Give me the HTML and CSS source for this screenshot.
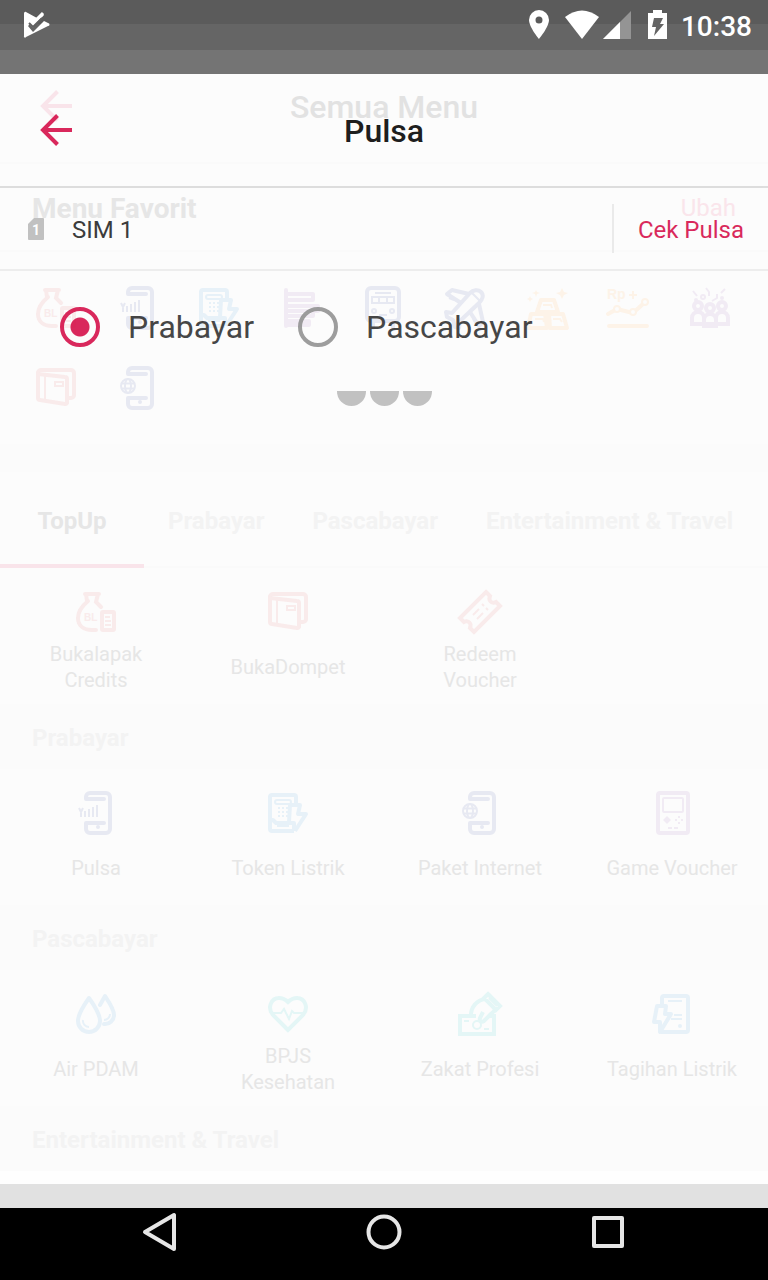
FILE: index.html
```html
<!DOCTYPE html>
<html lang="id">
<head>
<meta charset="utf-8">
<meta name="viewport" content="width=device-width, initial-scale=1">
<title>Pulsa</title>
<link rel="stylesheet" href="styles.css">
</head>
<body>
<svg class="sprite" aria-hidden="true">
  <symbol id="arrow" viewBox="0 0 32 32"><path d="M32 16H3M17.500 1.500 3 16l14.500 14.500" stroke-width="4"/></symbol>
  <symbol id="bag" viewBox="0 0 48 48">
    <path d="M13 6h14M14 6l1 7h1M26 6l-2 8 5 5M16 13C10 18 6 23 6 30c0 8 6 12 14 12h4" stroke-linecap="round"/>
    <rect x="30" y="24" width="12" height="18" rx="1"/><path d="M33 29h5M33 33h6M33 37h6" stroke-width="2"/>
    <text x="12" y="33" class="glyph-small">BL</text>
  </symbol>
  <symbol id="wallet" viewBox="0 0 48 48">
    <path d="M6 34V9a3 3 0 0 1 3-3h30a3 3 0 0 1 3 3v22a3 3 0 0 1-3 3h-2"/><path d="M6 10l27 3a2 2 0 0 1 2 2v24a2 2 0 0 1-2 1L8 36a2 2 0 0 1-2-2z"/>
    <path d="M13 12v23M23 18h8v4h-8z" stroke-width="2"/>
  </symbol>
  <symbol id="phone" viewBox="0 0 48 48">
    <path d="M32 10H14V8a4 4 0 0 1 4-4h16a4 4 0 0 1 4 4v32a4 4 0 0 1-4 4H18a4 4 0 0 1-4-4v-6h18" stroke-linejoin="round" stroke-linecap="round"/>
    <circle class="solid" cx="26" cy="38" r="2"/>
  </symbol>
  <symbol id="pulsa" viewBox="0 0 48 48"><use href="#phone"/><path d="M7 19l2 4 2-4M9 22v6M13 22v6M17 20v8M21 18v10M25 16v12" stroke-width="2"/></symbol>
  <symbol id="internet" viewBox="0 0 48 48"><use href="#phone"/><g stroke-width="2"><circle cx="14" cy="22" r="7"/><path d="M7 19.500h14M7 24.500h14"/><ellipse cx="14" cy="22" rx="3" ry="7"/></g></symbol>
  <symbol id="token" viewBox="0 0 48 48">
    <path d="M32 16V8a2 2 0 0 0-2-2H8a2 2 0 0 0-2 2v32a2 2 0 0 0 2 2h22M7 31h2l3 3h18v8M25 33l1-17h10l-2 9h8L31 42" stroke-linejoin="round"/>
    <rect x="11" y="11" width="16" height="4" rx="2" stroke-width="2"/><path d="M14 19h2m2 0h2m2 0h2M14 23h2m2 0h2m2 0h2M14 27h2m2 0h2m2 0h2M13 37h12" stroke-width="2"/>
  </symbol>
</svg>

<header class="status">
  <svg width="28" height="28" viewBox="0 0 28 28" role="img" aria-label="Notifikasi"><path d="M2 3v22a1 1 0 0 0 2 1l22-11a1.500 1.500 0 0 0 0-3l-4-2L11 21l-5-6 2-2 3 3 9-12-1-1-4 4L4 1C3 .5 2 1 2 3z" fill="#fff"/><path d="M14 8l6-6 2 2-8 9-3 4-5-5 2-2 3 3z" fill="#fff"/><path d="M7 12l4 4 9-9" fill="none" stroke="#606060" stroke-width="2"/><path d="M14 9l7-7" stroke="#fff" stroke-width="3"/></svg>
  <div class="status-right">
    <svg width="20" height="30" viewBox="0 0 20 30" role="img" aria-label="Lokasi"><path d="M10 0a10 10 0 0 0-10 10c0 7 10 19 10 19s10-12 10-19A10 10 0 0 0 10 0zm0 13.500a3.500 3.500 0 1 1 0-7 3.500 3.500 0 0 1 0 7z" fill="#fff"/></svg>
    <svg class="wifi" width="34" height="30" viewBox="0 0 34 30" role="img" aria-label="Wi-Fi"><path d="M0 7Q17-6 34 7L17 29z" fill="#fff"/></svg>
    <svg width="28" height="30" viewBox="0 0 28 30" role="img" aria-label="Sinyal"><path d="M28 1v28H0z" fill="#949494"/><path d="M17 12v17H0z" fill="#fff"/></svg>
    <svg class="battery" width="19" height="30" viewBox="0 0 19 30" role="img" aria-label="Baterai"><path d="M5 0h9v3h5v26H0V3h5z" fill="#fff"/><path d="M6 8h9l-3 6h4L6 26l2-9H4z" fill="#646464"/></svg>
    <time>10:38</time>
  </div>
</header>

<div class="stage">
  <section class="under" aria-label="Semua Menu">
    <div class="bar"><button class="back faint-pink" aria-label="Kembali"><svg class="line" width="32" height="32"><use href="#arrow"/></svg></button><h2 class="title">Semua Menu</h2></div>
    <div class="fav-head"><h3>Menu Favorit</h3><a href="#">Ubah</a></div>
    <div class="fav-grid">
      <svg class="icon red"><use href="#bag"/></svg>
      <svg class="icon navy"><use href="#pulsa"/></svg>
      <svg class="icon blue"><use href="#token"/></svg>
      <svg class="icon purple" viewBox="0 0 48 48"><path d="M9 6v36" stroke-linecap="round"/><path d="M10 10h26v6H10M10 22h31v5H10M10 32h26v-5M10 37h22v4H10" stroke-linejoin="round"/></svg>
      <svg class="icon navy" viewBox="0 0 48 48"><rect x="8" y="4" width="32" height="33" rx="4"/><path d="M14 38v6M34 38v6" stroke-linecap="round"/><g stroke-width="2"><path d="M16 9h16M13 13h22v6H13zM20 13v6M28 13v6M20 31h8"/><circle cx="15" cy="27" r="2"/><circle cx="33" cy="27" r="2"/></g></svg>
      <svg class="icon navy" viewBox="0 0 48 48"><g stroke-linejoin="round"><path d="M40 8c-3-3-8-2-11 1L11 29l-6-1 1 5 6 3 2 7 4 1 1-7 19-18c4-4 5-8 2-11z"/><path d="M28 10L11 6l-5 4 14 9M38 20l4 18-4 4-9-14"/></g><path d="M31 9l8 8M8 14l5 2M32 35l3 5" stroke-width="2"/></svg>
      <svg class="icon orange" viewBox="0 0 48 48"><path d="M18 16h13l4 12H14zM8 30h14l2 14H5zM26 30h14l4 14H27z" stroke-linejoin="round"/><path d="M20 21h8l1 3M12 35h8l1 3M30 35h7l2 3" stroke-width="2"/><path class="solid" d="M39 4l2 4 4 1-4 2-2 4-2-4-4-2 4-1zM13 6l1 2 3 1-3 1-1 3-1-3-3-1 3-1zM7 12l1 2 2 1-2 1-1 2-1-2-2-1 2-1z"/></svg>
      <svg class="icon orange" viewBox="0 0 48 48"><path d="M4 30l9-5 16 4 11-10M5 42h38" stroke-linecap="round"/><circle class="hollow" cx="13" cy="25" r="3" stroke-width="2"/><circle class="hollow" cx="29" cy="28" r="3" stroke-width="2"/><circle class="hollow" cx="41" cy="18" r="3" stroke-width="2"/><path d="M29 7v8M25 11h8" stroke-width="2"/><text x="3" y="15" class="glyph">Rp</text></svg>
      <svg class="icon purple" viewBox="0 0 48 48"><circle cx="12" cy="22" r="4"/><circle cx="36" cy="22" r="4"/><path d="M6 40V34c0-8 12-8 12 0v6zM30 40V34c0-8 12-8 12 0v6z"/><circle class="hollow" cx="24" cy="24" r="4"/><path class="hollow" d="M18 40v-4c0-8 12-8 12 0v4z"/><path d="M16 43h16M7 7l4 5M20 4l3 4v4M26 17l5-3v-4M35 9l4-4" stroke-width="2"/><circle cx="17" cy="13" r="2" stroke-width="2"/><circle class="solid" cx="36" cy="14" r="2"/><circle class="solid" cx="10" cy="16" r="2"/></svg>
      <svg class="icon red"><use href="#wallet"/></svg>
      <svg class="icon navy"><use href="#internet"/></svg>
    </div>
    <div class="spacer"></div>
    <nav class="tabs"><button class="tab current">TopUp</button><button class="tab">Prabayar</button><button class="tab">Pascabayar</button><button class="tab">Entertainment &amp; Travel</button></nav>
    <div class="menu">
      <a class="item" href="#"><svg class="icon red"><use href="#bag"/></svg><span>Bukalapak Credits</span></a>
      <a class="item" href="#"><svg class="icon red"><use href="#wallet"/></svg><span>BukaDompet</span></a>
      <a class="item" href="#"><svg class="icon red" viewBox="0 0 48 48"><path d="M30 4l4 4c-2 5 2 8 6 6l4 4-26 26-4-4c2-5-2-8-6-6l-4-4z"/><path d="M17 27l6-6M21 31l6-6M26 16l2 2M30 20l2 2" stroke-width="2"/></svg><span>Redeem Voucher</span></a>
    </div>
    <h3 class="band">Prabayar</h3>
    <div class="menu">
      <a class="item" href="#"><svg class="icon navy"><use href="#pulsa"/></svg><span>Pulsa</span></a>
      <a class="item" href="#"><svg class="icon blue"><use href="#token"/></svg><span>Token Listrik</span></a>
      <a class="item" href="#"><svg class="icon navy"><use href="#internet"/></svg><span>Paket Internet</span></a>
      <a class="item" href="#"><svg class="icon purple" viewBox="0 0 48 48"><rect x="10" y="4" width="30" height="40" rx="2"/><rect x="15" y="9" width="20" height="14" rx="1" stroke-width="2"/><path class="solid" d="M19 27l2 2 2 2-2 2-2 2-2-2-2-2 2-2z"/><path d="M30 28h2M30 34h2M27 31h2M33 31h2M20 39h4M26 39h4" stroke-width="2"/></svg><span>Game Voucher</span></a>
    </div>
    <h3 class="band">Pascabayar</h3>
    <div class="menu">
      <a class="item" href="#"><svg class="icon blue" viewBox="0 0 48 48"><path d="M17 8C12 15 6 24 6 31a11 11 0 0 0 22 0C28 24 22 15 17 8zM28 15l5-9c4 6 9 13 9 19a9 9 0 0 1-10 9" stroke-linecap="round" stroke-linejoin="round"/><path d="M11 30a6 6 0 0 0 6 7M38 24a6 6 0 0 1-6 6" stroke-width="2"/></svg><span>Air PDAM</span></a>
      <a class="item" href="#"><svg class="icon teal" viewBox="0 0 48 48"><path d="M24 40L9 25C3 18 7 8 15 8c4 0 7 2 9 4 2-2 5-4 9-4 8 0 12 10 6 17z"/><path d="M6 23h11l3-4 5 10 3-8 2 2h12" stroke-width="2"/></svg><span>BPJS Kesehatan</span></a>
      <a class="item" href="#"><svg class="icon teal" viewBox="0 0 48 48"><path d="M20 26H4v18h34V26h-4M32 4l12 12-4 4L28 8zM29 9c-8 1-14 8-14 16M39 19c-1 4-4 4-6 7l-5 5c-3 2-5-1-4-3l3-6"/><path d="M33 8l8 8M8 31h5M28 39h5" stroke-width="2"/><circle cx="21" cy="35" r="4" stroke-width="2"/></svg><span>Zakat Profesi</span></a>
      <a class="item" href="#"><svg class="icon blue" viewBox="0 0 48 48"><path d="M14 14V8a2 2 0 0 1 2-2h22a2 2 0 0 1 2 2v32a2 2 0 0 1-2 2H13M9 16h9l-1 8h6L12 42V32H6z" stroke-linejoin="round"/><path d="M20 11h14M26 25h8M23 29h11" stroke-width="2"/><circle class="solid" cx="32" cy="36" r="2"/></svg><span>Tagihan Listrik</span></a>
    </div>
    <h3 class="band">Entertainment &amp; Travel</h3>
  </section>

  <main class="over">
    <div class="bar"><button class="back" aria-label="Kembali"><svg class="line" width="32" height="32"><use href="#arrow"/></svg></button><h1 class="title">Pulsa</h1></div>
    <div class="sim">
      <svg width="16" height="22" viewBox="0 0 16 22" aria-hidden="true"><path d="M6 0h9a1 1 0 0 1 1 1v20a1 1 0 0 1-1 1H1a1 1 0 0 1-1-1V6z" fill="#b9b9b9"/><text x="4" y="17" class="sim-number">1</text></svg>
      <span class="sim-name">SIM 1</span>
      <button class="check">Cek Pulsa</button>
    </div>
    <div class="choices">
      <label><input type="radio" name="jenis" checked>Prabayar</label>
      <label><input type="radio" name="jenis">Pascabayar</label>
    </div>
    <div class="loader" role="status" aria-label="Memuat"><i></i><i></i><i></i></div>
  </main>
</div>

<footer class="system">
  <button aria-label="Kembali"><svg width="40" height="40" viewBox="0 0 40 40"><path d="M34 3v34L5 20z"/></svg></button>
  <button aria-label="Beranda"><svg width="40" height="40" viewBox="0 0 40 40"><circle cx="20" cy="20" r="15.500"/></svg></button>
  <button aria-label="Aplikasi terkini"><svg width="40" height="40" viewBox="0 0 40 40"><rect x="6" y="6" width="28" height="28"/></svg></button>
</footer>
</body>
</html>
```
FILE: styles.css
```css
* { box-sizing: border-box; }
body {
  margin: 0;
  min-height: 100vh;
  display: flex;
  flex-direction: column;
  background: #fefefe;
  font-family: Roboto, "Noto Sans", sans-serif;
  overflow-x: hidden;
}
h1, h2, h3 { margin: 0; }
button { border: 0; padding: 0; background: none; font: inherit; color: inherit; }
a { color: inherit; text-decoration: none; }
svg { display: block; flex: none; }
.sprite { display: none; }

.status {
  height: 74px;
  padding: 0 16px 24px 22px;
  display: flex;
  align-items: center;
  justify-content: space-between;
  color: #fff;
  background: linear-gradient(#5b5b5b 24px, #656565 24px 50px, #747474 50px);
}
.status-right { display: flex; align-items: center; font-size: 28px; font-weight: 500; line-height: 48px; }
.status time { padding-top: 4px; }
.wifi { margin-left: 16px; margin-right: 4px; }
.battery { margin: 0 14px 0 17px; }

.stage { flex: 1; display: grid; grid-template-columns: minmax(0, 1fr); align-items: start; border-bottom: 24px solid #e1e1e1; }
.under, .over { grid-area: 1 / 1; }
.under { color: #e6e6e6; background: #fcfcfc; }
.over { opacity: .88; color: #222; }

.bar { display: grid; grid-template-columns: 112px 1fr 112px; align-items: center; }
.under .bar { height: 90px; padding-bottom: 24px; border-bottom: 2px solid #fafafa; }
.over .bar { height: 114px; border-bottom: 2px solid #d9d9d9; }
.back { justify-self: center; color: #d50b46; }
.back.faint-pink { color: #f9e4ea; }
.line { fill: none; stroke: currentColor; }
.title { padding-top: 2px; font-size: 32px; line-height: 40px; font-weight: 500; text-align: center; }
.under .title { color: #e2e2e2; }
.over .title { color: #000; }

.fav-head { height: 88px; padding: 2px 32px 0; display: flex; align-items: center; justify-content: space-between; border-bottom: 2px solid #fafafa; }
.fav-head h3 { font-size: 28px; font-weight: 700; }
.fav-head a { font-size: 24px; color: #fae5eb; }
.fav-grid { padding: 16px 17px 16px 15px; display: grid; grid-template-columns: repeat(9, 1fr); grid-auto-rows: 80px; place-items: center; }
.icon { width: 48px; height: 48px; fill: none; stroke: currentColor; stroke-width: 4; }
.solid { fill: currentColor; stroke: none; }
.hollow { fill: #fcfcfc; }
.glyph, .glyph-small { fill: currentColor; stroke: none; font-family: "Liberation Sans", Arial, sans-serif; font-weight: 700; font-size: 14px; }
.glyph-small { font-size: 10px; }
.red { color: #f9ebeb; }
.navy { color: #e7e9f2; }
.blue { color: #e7f1f8; }
.purple { color: #f1ebf4; }
.orange { color: #fdf3e8; }
.teal { color: #e4f6f6; }

.spacer { height: 28px; background: #fbfbfb; }
.tabs { height: 96px; display: flex; overflow: hidden; box-shadow: inset 0 -2px #fafafa; }
.tab { flex: none; padding: 2px 24px 0; font-size: 24px; font-weight: 700; color: #f3f3f3; }
.tab.current { min-width: 144px; color: #e6e6e6; box-shadow: inset 0 -4px #f9e4ea; }
.menu { display: grid; grid-template-columns: repeat(4, 1fr); }
.item { padding: 20px 24px 11px; display: flex; flex-direction: column; align-items: center; gap: 5px; }
.item span { height: 52px; display: flex; align-items: center; font-size: 20px; line-height: 26px; text-align: center; }
.band { height: 65px; padding: 2px 32px 0; display: flex; align-items: center; font-size: 24px; font-weight: 700; color: #f3f3f3; background: #fbfbfb; }

.sim { height: 83px; padding-left: 28px; display: flex; align-items: center; font-size: 24px; border-bottom: 2px solid #ebebeb; }
.sim-name { flex: 1; padding: 2px 0 0 28px; }
.sim-number { font-size: 14px; font-weight: 700; fill: #fff; }
.check { height: 49px; padding: 2px 24px 0; border-left: 2px solid #e8e8e8; color: #d50b46; }
.choices { height: 120px; padding: 0 60px 8px; display: flex; align-items: center; gap: 44px; font-size: 32px; color: #2e2e2e; }
.choices label { display: flex; align-items: center; gap: 28px; }
.choices input {
  appearance: none;
  width: 40px;
  height: 40px;
  margin: 0;
  border: 4px solid #909090;
  border-radius: 50%;
}
.choices input:checked { border-color: #d50b46; background: radial-gradient(circle, #d50b46 9px, transparent 10px); }
.loader { display: flex; justify-content: center; gap: 4px; }
.loader i { width: 29px; height: 15px; border-radius: 0 0 15px 15px; background: #b9b9b9; }

.system { height: 72px; padding: 0 6.25% 24px; display: grid; grid-template-columns: repeat(3, 1fr); place-items: center; background: #000; }
.system svg { fill: none; stroke: #e6e6e6; stroke-width: 4; stroke-linejoin: round; }
```
